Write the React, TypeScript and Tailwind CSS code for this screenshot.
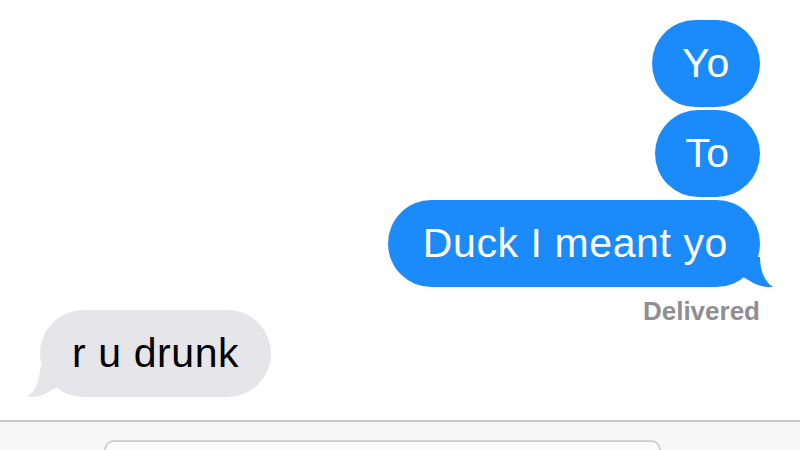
function Tail({ color, side }: { color: string; side: 'left' | 'right' }) {
  const pos = side === 'right' ? 'right-[-13px]' : 'left-[-13px] -scale-x-100';
  return (
    <svg className={`absolute bottom-0 ${pos}`} width="30" height="30" viewBox="0 0 30 30">
      <path d="M0 0 H17 C17 14 22 25 30 30 C23 30.5 14 29 7 24 L0 20 Z" fill={color} />
    </svg>
  );
}

function Sent({ text, width, tail }: { text: string; width?: string; tail?: boolean }) {
  return (
    <div
      className={`relative flex h-[87px] items-center rounded-[44px] bg-[#1b8bfb] text-[41px] tracking-[0.6px] text-white ${
        width ? `${width} justify-center` : 'pl-[35px] pr-[32px]'
      }`}
    >
      <span className="relative z-10">{text}</span>
      {tail && <Tail color="#1b8bfb" side="right" />}
    </div>
  );
}

export default function App() {
  return (
    <div className="flex h-[450px] w-[800px] flex-col overflow-hidden bg-white font-['Liberation_Sans',Arial,sans-serif]">
      <div className="flex flex-1 flex-col pt-[20px]">
        <div className="flex flex-col items-end gap-[3px] pr-[40px]">
          <Sent text="Yo" width="w-[108px]" />
          <Sent text="To" width="w-[105px]" />
          <Sent text="Duck I meant yo" tail />
          <div className="mt-[8px] text-[26px] font-bold leading-[26px] text-[#8e8e93]">Delivered</div>
        </div>
        <div className="mt-[-14px] flex pl-[40px]">
          <div className="relative flex h-[87px] items-center rounded-[44px] bg-[#e5e5ea] px-[32px] text-[41px] tracking-[0.6px] text-black">
            <span className="relative z-10">r u drunk</span>
            <Tail color="#e5e5ea" side="left" />
          </div>
        </div>
      </div>
      <div className="h-[30px] border-t-2 border-[#c8c8cc] bg-[#f7f7f7] pt-[18px]">
        <div className="ml-[104px] h-[20px] w-[557px] rounded-t-[10px] border-2 border-b-0 border-[#d0d0d4] bg-[#fbfbfb]" />
      </div>
    </div>
  );
}
